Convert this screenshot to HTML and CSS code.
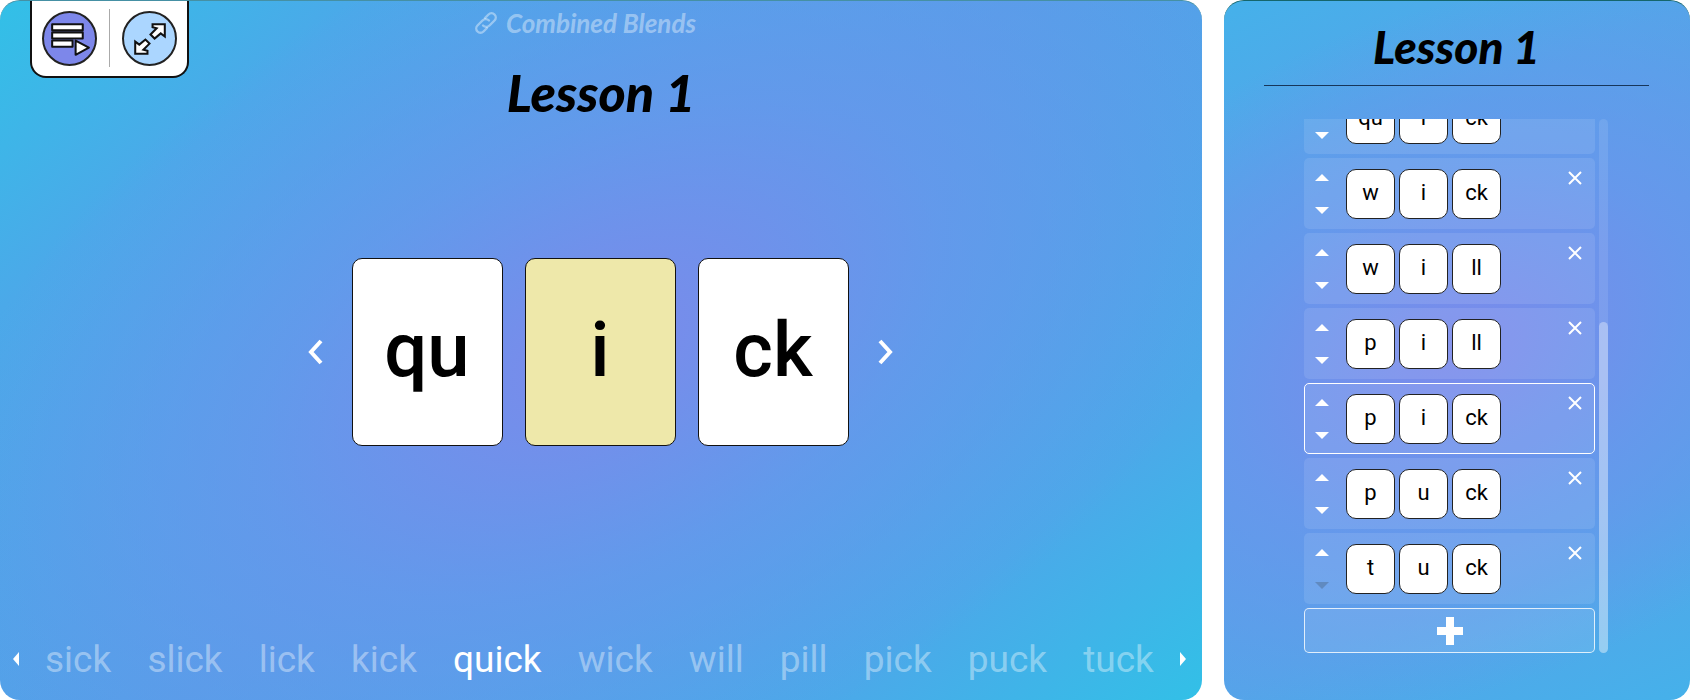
FILE: index.html
```
<!DOCTYPE html>
<html lang="en">
<head>
<meta charset="utf-8">
<title>Lesson 1</title>
<link rel="stylesheet" href="styles.css">
</head>
<body>
<main class="panel stage">
  <nav class="toolbar" aria-label="Tools">
    <button class="tool tool-list" aria-label="Word list">
      <svg viewBox="0 0 50 50"><g fill="#fff" stroke="#111" stroke-width="2" stroke-linejoin="round"><rect x="8" y="11" width="30" height="6"/><rect x="8" y="19" width="30" height="6"/><rect x="8" y="27" width="20" height="6"/><path d="M31 27v14l13-7z"/></g></svg>
    </button>
    <span class="divider"></span>
    <button class="tool tool-expand" aria-label="Full screen">
      <svg viewBox="0 0 50 50"><g fill="#fff" stroke="#111" stroke-width="2"><path d="M28 11h12v12l-4-3-6 5-4-4 6-6-4-1z"/><path d="M23 40H11V28l4 3 6-5 4 4-6 6 4 1z"/></g></svg>
    </button>
  </nav>
  <header class="heading">
    <a class="crumb" href="#blends"><svg class="link-icon" viewBox="0 0 24 24"><g fill="none" stroke="currentColor" stroke-width="2.4" stroke-linecap="round"><path d="M9 14.500a4.500 4.500 0 0 0 6.500 0l5-5a4.200 4.200 0 0 0-6-6l-3.500 3.500"/><path d="M15 9.500a4.500 4.500 0 0 0-6.500 0l-5 5a4.200 4.200 0 0 0 6 6l3.500-3.500"/></g></svg>Combined Blends</a>
    <h1 class="title">Lesson 1</h1>
  </header>
  <section class="cards" aria-label="Current word">
    <button class="step" aria-label="Previous word"><svg viewBox="0 0 16 28"><path d="M13 3L3 14l10 11"/></svg></button>
    <div class="card">qu</div>
    <div class="card vowel">i</div>
    <div class="card">ck</div>
    <button class="step" aria-label="Next word"><svg viewBox="0 0 16 28"><path d="M3 3l10 11L3 25"/></svg></button>
  </section>
  <nav class="words" aria-label="Words">
    <button class="scroll" aria-label="Scroll left"><svg viewBox="0 0 8 16"><path d="M7 1v14L1 8z"/></svg></button>
    <div class="word-strip">
      <a href="#sick">sick</a><a href="#slick">slick</a><a href="#lick">lick</a><a href="#kick">kick</a><a href="#quick" class="current">quick</a><a href="#wick">wick</a><a href="#will">will</a><a href="#pill">pill</a><a href="#pick">pick</a><a href="#puck">puck</a><a href="#tuck">tuck</a>
    </div>
    <button class="scroll" aria-label="Scroll right"><svg viewBox="0 0 8 16"><path d="M1 1v14l6-7z"/></svg></button>
  </nav>
</main>
<aside class="panel side">
  <h2 class="title side-title">Lesson 1</h2>
  <div class="list-area">
    <div class="list" id="list"></div>
    <div class="track"><div class="thumb"></div></div>
  </div>
</aside>
<script src="list.js"></script>
</body>
</html>
```
FILE: list.js
```
const words = [["qu","i","ck"],["w","i","ck"],["w","i","ll"],["p","i","ll"],["p","i","ck"],["p","u","ck"],["t","u","ck"]];
const selected = 4;
const rows = words.map((parts, i) => `
  <div class="row${i === selected ? " selected" : ""}">
    <div class="order">
      <button class="move" aria-label="Move up"><svg viewBox="0 0 14 7"><path d="M0 7L7 0l7 7z"/></svg></button>
      <button class="move" aria-label="Move down"${i === words.length - 1 ? " disabled" : ""}><svg viewBox="0 0 14 7"><path d="M0 0h14L7 7z"/></svg></button>
    </div>
    <div class="tiles">${parts.map(p => `<span class="tile">${p}</span>`).join("")}</div>
    <button class="remove" aria-label="Remove"><svg viewBox="0 0 14 14"><path d="M1 1l12 12M13 1L1 13"/></svg></button>
  </div>`).join("");
document.getElementById("list").innerHTML = rows +
  `<button class="add" aria-label="Add word"><svg viewBox="0 0 26 28"><path d="M9 0h8v10h9v8h-9v10H9V18H0v-8h9z"/></svg></button>`;
```
FILE: styles.css
```
* { box-sizing: border-box; }
body {
  margin: 0;
  height: 100vh;
  display: grid;
  grid-template-columns: minmax(0, 1202fr) minmax(0, 466fr);
  column-gap: 22px;
  background: #fff;
  font-family: Roboto, "Liberation Sans", sans-serif;
  color: #000;
  overflow: hidden;
}
button {
  padding: 0;
  border: 0;
  background: none;
  font: inherit;
  color: inherit;
  cursor: pointer;
}
svg { display: block; }
a { color: inherit; text-decoration: none; }
.panel {
  position: relative;
  isolation: isolate;
  border-radius: 20px;
  overflow: hidden;
  min-height: 0;
}
/* tilted purple glow behind the panel's content */
.panel::before {
  content: "";
  position: absolute;
  inset: -30%;
  z-index: -1;
}
.stage {
  display: grid;
  grid-template-rows: 120px 1fr 70px;
  border-top: 1px solid #4590a4;
  background: linear-gradient(140deg, #32c0e7, #4ba9e9 18%, #559fe8 50%, #4ba9e9 82%, #32c0e7);
}
.stage::before {
  transform: rotate(-26deg);
  background: radial-gradient(ellipse 38% 38% at 50% 50%, #7b8aeb, #6996ecb3 50%, #5a9fe900);
}
.toolbar {
  position: absolute;
  top: -1px;
  left: 30px;
  display: flex;
  align-items: center;
  gap: 12px;
  padding: 9px 10px;
  background: #fff;
  border: 2px solid #111;
  border-top: 0;
  border-radius: 0 0 16px 16px;
}
.tool {
  width: 55px;
  height: 55px;
  border: 2px solid #222;
  border-radius: 50%;
}
.tool-list { background: #7d87ea; }
.tool-expand { background: #abd6ff; }
.divider { width: 1px; height: 58px; background: #aaa; }
.heading {
  display: flex;
  flex-direction: column;
  align-items: center;
  padding-top: 6px;
  gap: 18px;
}
.crumb {
  display: flex;
  align-items: center;
  gap: 8px;
  padding-right: 32px;
  font: italic bold 26px/32px Lato, sans-serif;
  color: #ffffff66;
}
.link-icon { width: 24px; height: 24px; }
.title {
  margin: 0;
  font: italic 900 52px/70px Lato, sans-serif;
}
.cards {
  display: flex;
  align-items: center;
  justify-content: center;
  gap: 22px;
  padding: 0 2px 48px 0;
}
.card {
  width: 151px;
  height: 188px;
  display: grid;
  place-items: center;
  padding-bottom: 4px;
  background: #fff;
  border: 1px solid #111;
  border-radius: 10px;
  font-size: 76px;
  font-weight: 500;
}
.vowel { background: #eee8aa; }
.step svg {
  width: 16px;
  height: 28px;
  margin: 0 6px;
  fill: none;
  stroke: #fff;
  stroke-width: 4;
}
.words {
  display: flex;
  align-items: center;
  gap: 25px;
  padding: 0 15px 12px 12px;
  font-size: 37px;
  color: #ffffff66;
}
.word-strip {
  flex: 1;
  display: flex;
  justify-content: space-between;
}
.words .current { color: #fff; }
.scroll svg { width: 8px; height: 16px; fill: #fff; }
.side {
  display: flex;
  flex-direction: column;
  padding: 0 41px 47px 40px;
  border-top: 1px solid #15666c;
  background: linear-gradient(155deg, #45b1ea, #55a4e9 24%, #5a9fe9 50%, #55a4e9 76%, #45b1ea);
}
.side::before {
  transform: rotate(-22deg);
  background: radial-gradient(ellipse 66% 30% at 50% 50%, #7b8aeb, #6996eccc 50%, #5a9fe900);
}
.side-title {
  padding-top: 8px;
  text-align: center;
  font-size: 46px;
  line-height: 76px;
  border-bottom: 1px solid #17365a;
}
.list-area {
  flex: 1;
  min-height: 0;
  display: flex;
  gap: 4px;
  margin: 33px 41px 0 40px;
}
.list {
  flex: 1;
  min-height: 0;
  overflow: hidden;
  display: flex;
  flex-direction: column;
  justify-content: flex-end;
  gap: 4px;
}
.row {
  flex: none;
  height: 71px;
  display: flex;
  align-items: center;
  border: 1px solid transparent;
  border-radius: 5px;
  background: #ffffff1a;
  background-clip: border-box;
  padding: 0 12px 0 10px;
}
.selected { border-color: #fff; }
.order { display: flex; flex-direction: column; gap: 26px; }
.move { width: 14px; height: 7px; }
.move svg { width: 14px; height: 7px; fill: #fff; }
.move:disabled svg { fill: #5a7fae; opacity: .7; }
.tiles { display: flex; gap: 4px; margin-left: 17px; flex: 1; }
.tile {
  width: 49px;
  height: 50px;
  display: grid;
  place-items: center;
  padding-bottom: 3px;
  background: #fff;
  border: 1px solid #222;
  border-radius: 10px;
  font-size: 22px;
}
.remove { align-self: flex-start; margin-top: 12px; }
.remove svg { width: 14px; height: 14px; stroke: #fff; stroke-width: 2; fill: none; }
.add {
  flex: none;
  height: 45px;
  display: grid;
  place-items: center;
  border: 1px solid #ffffffcc;
  border-radius: 5px;
  background: #ffffff1a;
}
.add svg { width: 26px; height: 28px; fill: #fff; }
.track {
  width: 9px;
  display: flex;
  align-items: flex-end;
  border-radius: 5px;
  background: #ffffff1a;
}
.thumb { width: 100%; height: 62%; border-radius: 5px; background: #ffffff59; }
```
